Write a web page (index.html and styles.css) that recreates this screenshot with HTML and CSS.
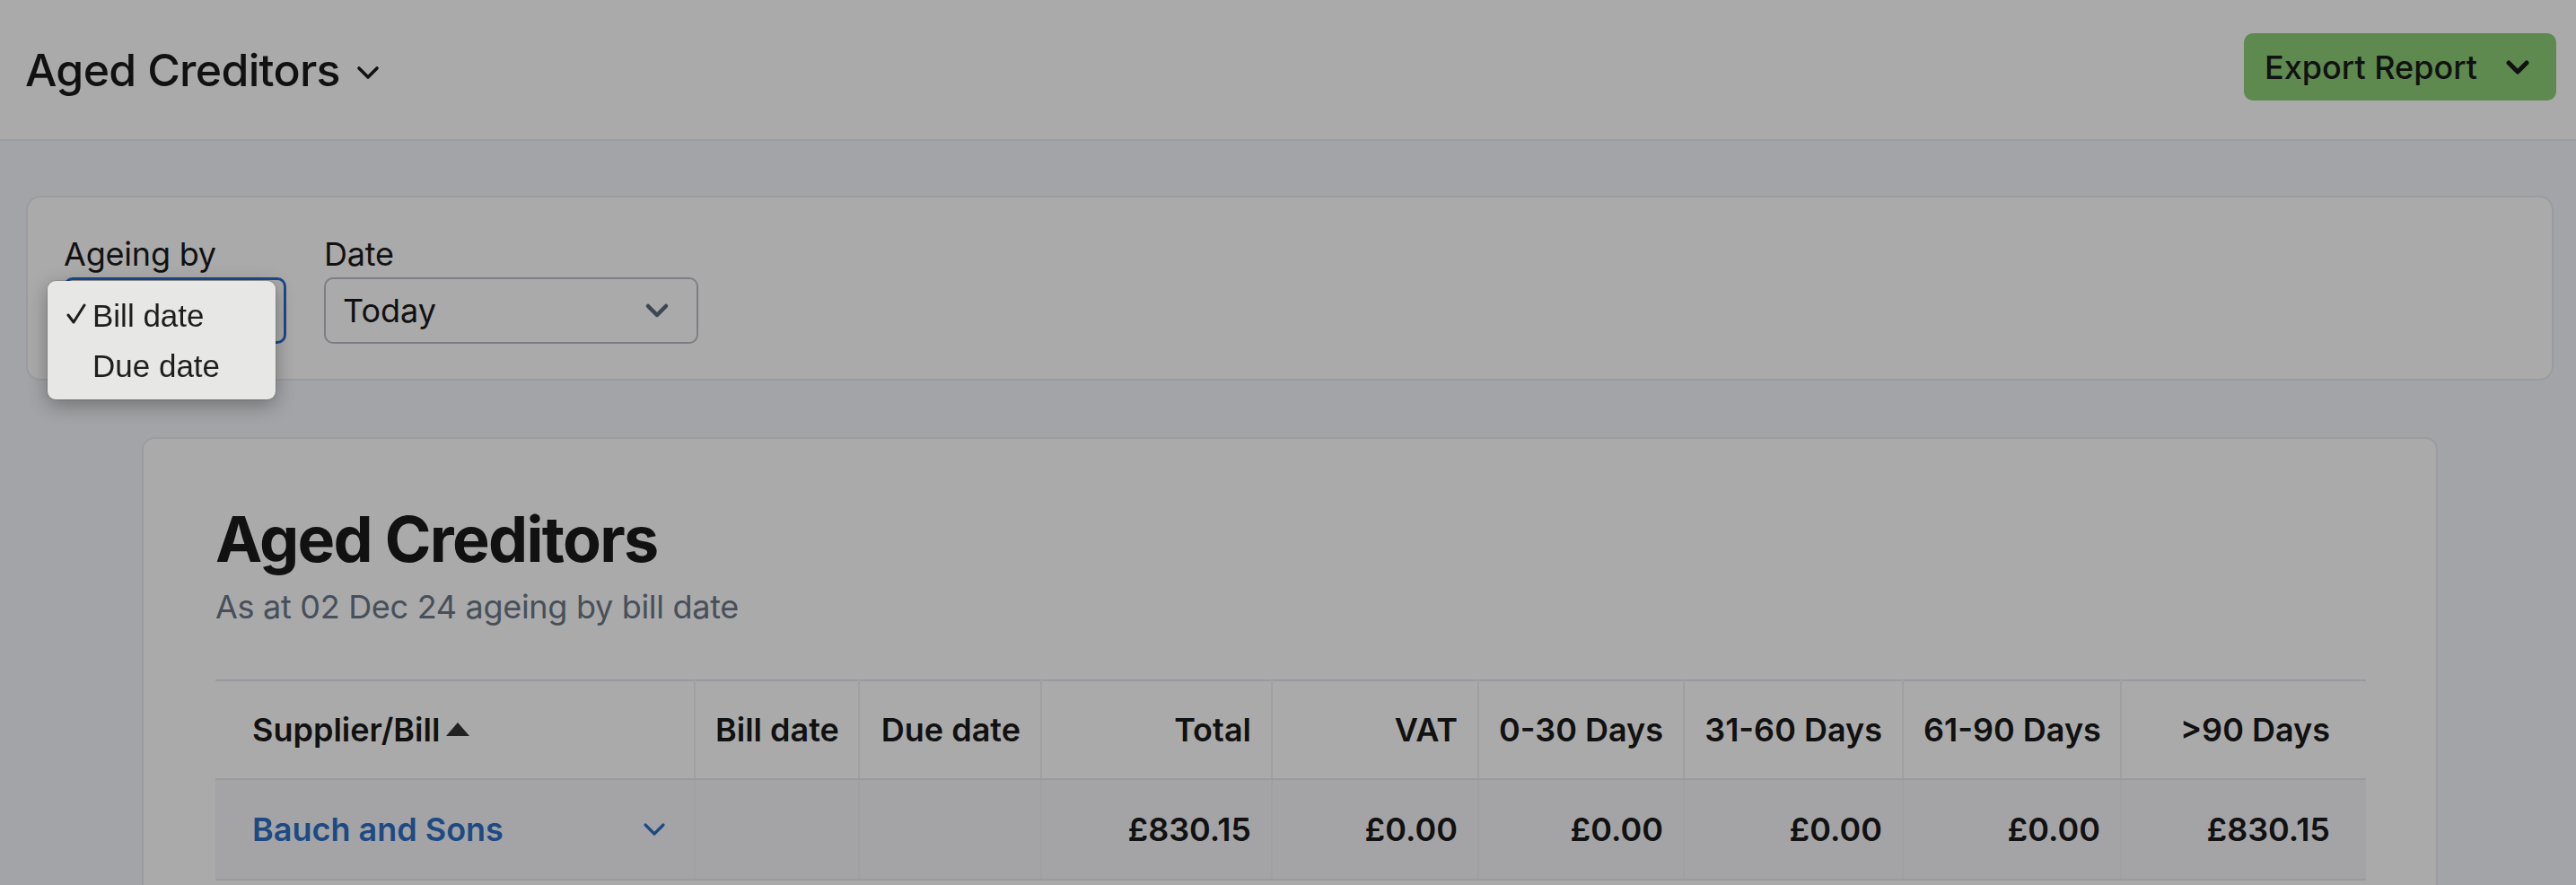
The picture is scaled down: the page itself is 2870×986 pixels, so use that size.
FILE: index.html
```html
<!DOCTYPE html>
<html lang="en">
<head>
<meta charset="utf-8">
<title>Aged Creditors</title>
<link rel="stylesheet" href="styles.css">
</head>
<body>
<header class="topbar">
  <div class="page-title">
    <span>Aged Creditors</span>
    <svg class="title-chev" width="26" height="16" viewBox="0 0 26 16"><path d="M3 3 L13 13 L23 3"/></svg>
  </div>
  <button class="export-btn" type="button">
    <span>Export Report</span>
    <svg class="export-chev" width="28" height="18" viewBox="0 0 28 18"><path d="M4 4 L14 14 L24 4"/></svg>
  </button>
</header>
<main class="main">
  <section class="filters">
    <div class="field">
      <div class="field-label">Ageing by</div>
      <div class="select select-ageing"></div>
      <ul class="menu">
        <li class="menu-item"><svg class="check" width="22" height="24" viewBox="0 0 22 24"><path d="M2 13 L8 21 L20 2"/></svg><span>Bill date</span></li>
        <li class="menu-item"><span class="check-slot"></span><span>Due date</span></li>
      </ul>
    </div>
    <div class="field">
      <div class="field-label">Date</div>
      <div class="select select-date">
        <span>Today</span>
        <svg class="select-chev" width="28" height="18" viewBox="0 0 28 18"><path d="M4 4 L14 14 L24 4"/></svg>
      </div>
    </div>
  </section>

  <section class="report">
    <h1 class="report-title">Aged Creditors</h1>
    <p class="subtitle">As at 02 Dec 24 ageing by bill date</p>
    <table class="ledger">
      <colgroup>
        <col class="w-supplier"><col class="w-bill"><col class="w-due"><col class="w-total"><col class="w-vat"><col class="w-b1"><col class="w-b2"><col class="w-b3"><col class="w-b4">
      </colgroup>
      <thead>
        <tr>
          <th class="col-first"><span class="sort">Supplier/Bill<svg class="sort-tri" width="26" height="15" viewBox="0 0 26 15"><polygon points="0,15 13,0 26,15"/></svg></span></th>
          <th>Bill date</th>
          <th>Due date</th>
          <th>Total</th>
          <th>VAT</th>
          <th>0-30 Days</th>
          <th>31-60 Days</th>
          <th>61-90 Days</th>
          <th class="col-last">&gt;90 Days</th>
        </tr>
      </thead>
      <tbody>
        <tr>
          <td class="col-first"><div class="supplier"><a class="supplier-link" href="#">Bauch and Sons</a><svg class="row-chev" width="26" height="18" viewBox="0 0 26 18"><path d="M3 4 L13 14 L23 4"/></svg></div></td>
          <td></td>
          <td></td>
          <td>£830.15</td>
          <td>£0.00</td>
          <td>£0.00</td>
          <td>£0.00</td>
          <td>£0.00</td>
          <td class="col-last">£830.15</td>
        </tr>
      </tbody>
    </table>
  </section>
</main>
<div class="overlay"></div>
</body>
</html>
```

FILE: styles.css
```css
* { box-sizing: border-box; }
html, body { margin: 0; padding: 0; }
body {
  width: 2870px;
  height: 986px;
  overflow: hidden;
  background: #f4f6fb;
  font-family: Inter, "Noto Sans", "Liberation Sans", sans-serif;
  color: #1a1a1a;
}

/* top bar */
.topbar {
  height: 157px;
  background: #ffffff;
  border-bottom: 2px solid #eceef3;
  display: flex;
  align-items: center;
  justify-content: space-between;
  padding: 0 22px 0 28px;
}
.page-title {
  display: flex;
  align-items: center;
  font-size: 50px;
  font-weight: 500;
  letter-spacing: -0.7px;
}
.title-chev {
  margin-left: 18px;
  margin-top: 6px;
  fill: none;
  stroke: #1a1a1a;
  stroke-width: 3.6;
  stroke-linecap: round;
  stroke-linejoin: round;
}
.export-btn {
  display: flex;
  align-items: center;
  gap: 31px;
  height: 75px;
  margin-top: -6px;
  padding: 0 29px 0 23px;
  background: #8dcf78;
  border: none;
  border-radius: 10px;
  font-family: inherit;
  font-size: 36px;
  font-weight: 500;
  color: #1a1a1a;
}
.export-chev {
  fill: none;
  stroke: #1a1a1a;
  stroke-width: 5;
  stroke-linecap: round;
  stroke-linejoin: round;
}

/* main */
.main { padding: 61px 25px 0 29px; }

.filters {
  display: flex;
  gap: 42px;
  background: #ffffff;
  border: 2px solid #e8eaef;
  border-radius: 16px;
  padding: 40px 40px 39px;
}
.field {
  position: relative;
  display: flex;
  flex-direction: column;
  gap: 3px;
}
.field-label {
  font-size: 36px;
  line-height: 46px;
  letter-spacing: -0.2px;
}
.select {
  height: 74px;
  display: flex;
  align-items: center;
  justify-content: space-between;
  padding: 0 30px 0 19px;
  background: #ffffff;
  border: 2px solid #babec6;
  border-radius: 10px;
  font-size: 36px;
}
.select-ageing {
  width: 248px;
  border: 3px solid #2c6fd1;
}
.select-date { width: 417px; }
.select-chev {
  fill: none;
  stroke: #5e6978;
  stroke-width: 4.5;
  stroke-linecap: round;
  stroke-linejoin: round;
}

/* native-like open menu */
.menu {
  position: absolute;
  left: -18px;
  top: 53px;
  z-index: 20;
  width: 254px;
  margin: 0;
  padding: 11px 0 9px;
  list-style: none;
  background: #e7e7e5;
  border-radius: 9px;
  box-shadow: 0 6px 22px rgba(0, 0, 0, 0.32), 0 0 0 1px rgba(0, 0, 0, 0.10);
  font-family: "Liberation Sans", Arial, sans-serif;
  font-size: 35px;
  color: #1e1e1e;
}
.menu-item {
  height: 56px;
  display: flex;
  align-items: center;
  padding-left: 21px;
}
.check {
  width: 22px;
  margin-right: 7px;
  margin-bottom: 4px;
  fill: none;
  stroke: #1e1e1e;
  stroke-width: 3;
  stroke-linecap: round;
  stroke-linejoin: round;
}
.check-slot { width: 22px; margin-right: 7px; }

/* report card */
.report {
  width: 2558px;
  margin: 63px auto 0;
  background: #ffffff;
  border: 2px solid #e8eaef;
  border-radius: 14px;
  padding: 70px 78px 40px 80px;
}
.report-title {
  margin: 0;
  font-size: 70px;
  line-height: 84px;
  font-weight: 700;
  letter-spacing: -1.7px;
}
.subtitle {
  margin: 10px 0 0;
  font-size: 36px;
  line-height: 46px;
  color: #6b7887;
  letter-spacing: -0.3px;
}

.ledger {
  width: 100%;
  margin-top: 58px;
  border-collapse: collapse;
  table-layout: fixed;
  font-size: 36px;
}
.w-supplier { width: 534px; }
.w-bill { width: 183px; }
.w-due { width: 203px; }
.w-total { width: 257px; }
.w-vat { width: 230px; }
.w-b1 { width: 229px; }
.w-b2 { width: 244px; }
.w-b3 { width: 243px; }
.w-b4 { width: 273px; }

.ledger th,
.ledger td {
  padding: 0 22px;
  text-align: right;
  vertical-align: middle;
  border-left: 2px solid #eef0f4;
  border-bottom: 2px solid #e6e8ef;
  white-space: nowrap;
}
.ledger thead tr { border-top: 2px solid #e6e8ef; }
.ledger th {
  height: 110px;
  font-weight: 600;
  background: #ffffff;
}
.ledger td {
  height: 112px;
  font-weight: 600;
  background: #f6f7fa;
}
.ledger .col-first {
  text-align: left;
  padding-left: 41px;
  padding-right: 31px;
  border-left: none;
}
.ledger .col-last { padding-right: 40px; }

.sort {
  display: inline-flex;
  align-items: center;
  gap: 7px;
}
.sort-tri { fill: #333333; margin-top: -2px; }

.supplier {
  display: flex;
  align-items: center;
  justify-content: space-between;
}
.supplier-link {
  color: #2e6fc7;
  text-decoration: none;
  font-weight: 600;
}
.row-chev {
  fill: none;
  stroke: #2e6fc7;
  stroke-width: 3.2;
  stroke-linecap: round;
  stroke-linejoin: round;
}

/* dimming backdrop behind the open menu */
.overlay {
  position: fixed;
  inset: 0;
  z-index: 10;
  background: rgba(0, 0, 0, 0.333);
}
```
